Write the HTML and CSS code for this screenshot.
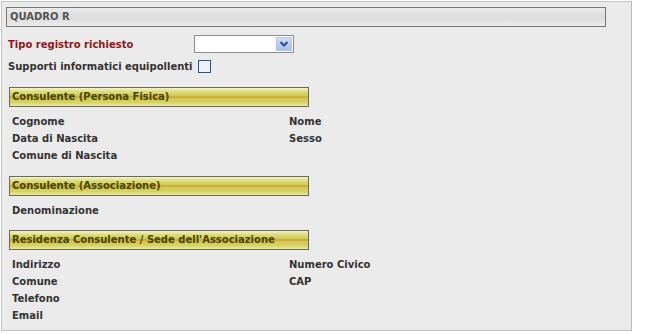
FILE: index.html
```html
<!DOCTYPE html>
<html lang="it">
<head>
  <meta charset="UTF-8">
  <title>Quadro R</title>
  <link rel="stylesheet" href="styles.css">
</head>
<body>
  <div class="panel">
    <div class="panel-title">QUADRO R</div>

    <div class="form-row row-tipo">
      <label class="field-label required">Tipo registro richiesto</label>
      <div class="select-box">
        <span class="select-arrow">
          <svg width="10" height="8" viewBox="0 0 10 8"><path d="M1.5 2 L5 5.5 L8.5 2" fill="none" stroke="#2b4a8a" stroke-width="2"/></svg>
        </span>
      </div>
    </div>

    <div class="form-row row-supporti">
      <label class="field-label">Supporti informatici equipollenti</label>
      <span class="checkbox"></span>
    </div>

    <div class="section-bar bar-first">Consulente (Persona Fisica)</div>
    <div class="field-grid">
      <span>Cognome</span><span>Nome</span>
      <span>Data di Nascita</span><span>Sesso</span>
      <span>Comune di Nascita</span><span></span>
    </div>

    <div class="section-bar">Consulente (Associazione)</div>
    <div class="field-grid">
      <span>Denominazione</span><span></span>
    </div>

    <div class="section-bar bar-last">Residenza Consulente / Sede dell'Associazione</div>
    <div class="field-grid">
      <span>Indirizzo</span><span>Numero Civico</span>
      <span>Comune</span><span>CAP</span>
      <span>Telefono</span><span></span>
      <span>Email</span><span></span>
    </div>
  </div>
</body>
</html>
```

FILE: styles.css
```css
/* Page */
* {
  box-sizing: border-box;
}

body {
  margin: 0;
  padding: 1px;
  background: #ffffff;
  font-family: "DejaVu Sans", Verdana, sans-serif;
  font-size: 10px;
  font-weight: bold;
  color: #333333;
  white-space: nowrap;
}

.panel {
  width: 631px;
  height: 330px;
  background: #ebebeb;
  border: 1px solid #c4c4c4;
  border-right-color: #bcbcbc;
  padding: 5px 25px 0 4px;
}

.panel-title {
  height: 20px;
  line-height: 18px;
  padding-left: 3px;
  border: 1px solid #777777;
  background: linear-gradient(#ececec, #dedede 45%, #e2e2e2 70%, #ececec);
  color: #555555;
}

/* Form rows */
.form-row {
  display: flex;
  align-items: center;
  padding-left: 2px;
}

.row-tipo {
  margin-top: 8px;
  height: 18px;
}

.row-supporti {
  margin-top: 6px;
  height: 14px;
}

.field-label {
  width: 186px;
}

.required {
  color: #8b1a1a;
}

.select-box {
  width: 100px;
  height: 18px;
  background: #ffffff;
  border: 1px solid #8e8e8e;
  display: flex;
  justify-content: flex-end;
  padding: 1px;
}

.select-arrow {
  width: 16px;
  height: 14px;
  background: linear-gradient(#cddbf7, #a9c0ef);
  border: 1px solid #b6c8ee;
  display: flex;
  align-items: center;
  justify-content: center;
}

.checkbox {
  width: 13px;
  height: 13px;
  margin-left: 4px;
  background: #f1f1f1;
  border: 1px solid #3a5270;
}

/* Section bars */
.section-bar {
  width: 300px;
  height: 20px;
  margin: 12px 0 0 3px;
  padding-left: 2px;
  line-height: 18px;
  border: 1px solid #6a6a58;
  color: #464600;
  background: linear-gradient(#f6f4c4, #e0dc80 20%, #cdc84c 45%, #d08a2c 50%, #cdc84c 55%, #d6d266 80%, #ebe9a6);
}

.bar-first {
  margin-top: 14px;
}

.bar-last {
  margin-top: 11px;
}

.field-grid {
  display: grid;
  grid-template-columns: 277px auto;
  grid-auto-rows: 17px;
  padding: 6px 0 0 6px;
  line-height: 17px;
}
```
